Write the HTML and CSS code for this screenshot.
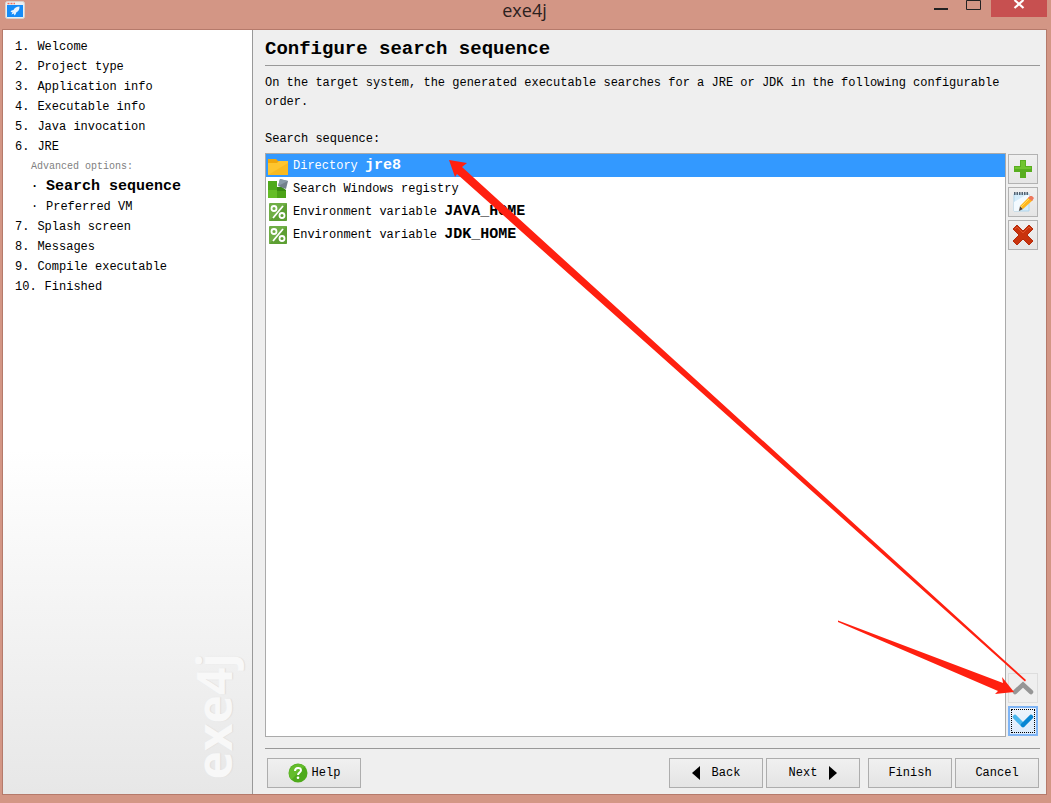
FILE: index.html
```html
<!DOCTYPE html>
<html lang="en">
<head>
  <meta charset="UTF-8">
  <meta name="viewport" content="width=device-width, initial-scale=1">
  <title>exe4j</title>
  <link rel="stylesheet" href="styles.css">
</head>
<body>
  <header class="titlebar">
    <svg class="app-icon" width="20" height="18" viewBox="0 0 20 18">
      <rect x="0.5" y="0.5" width="19" height="17" rx="2" fill="#e9eef2" stroke="#d9d2cd"/>
      <path d="M2.500 2.500h2M5.500 2.500h2M8.500 2.500h1.500" stroke="#f0705c" stroke-width="1.500"/>
      <rect x="2" y="4" width="16" height="12" fill="#148cf8"/>
      <path d="M14.500 5.500c-3 0-5 1.500-6 3.500l-2 .5-1 1.500 2 .2-1 2.300 2.500-1 .2 2 1.500-1.200.5-1.800c2.200-1 3.500-3 3.300-6z" fill="#e6f3ff"/>
    </svg>
    <h1 class="window-title">exe4j</h1>
    <div class="window-controls">
      <button type="button" class="control" aria-label="Minimize">
        <svg width="14" height="12" viewBox="0 0 14 12"><path d="M0 9h14" stroke="#222" stroke-width="2"/></svg>
      </button>
      <button type="button" class="control" aria-label="Maximize">
        <svg width="15" height="12" viewBox="0 0 15 12"><path d="M.5.5h14v9H.5z" fill="none" stroke="#222"/></svg>
      </button>
      <button type="button" class="control close" aria-label="Close">
        <svg width="12" height="10" viewBox="0 0 12 10"><path d="M1.500 0l9 8M10.500 0l-9 8" stroke="#fff" stroke-width="2.200"/></svg>
      </button>
    </div>
  </header>

  <div class="window">
    <nav class="sidebar">
      <ol class="steps">
        <li><span class="num">1.</span>Welcome</li>
        <li><span class="num">2.</span>Project type</li>
        <li><span class="num">3.</span>Application info</li>
        <li><span class="num">4.</span>Executable info</li>
        <li><span class="num">5.</span>Java invocation</li>
        <li><span class="num">6.</span>JRE
          <div class="advanced">Advanced options:</div>
          <ul class="substeps">
            <li class="current"><span class="dot">·</span>Search sequence</li>
            <li><span class="dot">·</span>Preferred VM</li>
          </ul>
        </li>
        <li><span class="num">7.</span>Splash screen</li>
        <li><span class="num">8.</span>Messages</li>
        <li><span class="num">9.</span>Compile executable</li>
        <li><span class="num">10.</span>Finished</li>
      </ol>
      <div class="watermark">exe4j</div>
    </nav>

    <main class="content">
      <h2>Configure search sequence</h2>
      <p class="description">On the target system, the generated executable searches for a JRE or JDK in the following configurable order.</p>
      <p class="list-label" id="sequenceLabel">Search sequence:</p>

      <div class="sequence">
        <ul class="entries" role="listbox" aria-labelledby="sequenceLabel">
          <li role="option" aria-selected="true" class="selected">
            <svg width="20" height="20" viewBox="0 0 20 20">
              <path d="M0 3h8l2 2h10v4H0z" fill="#efa70c"/>
              <path d="M0 7h9l2-2h9v14H0z" fill="#fdc52f"/>
              <path d="M0 19L20 7v12z" fill="#f8ba20"/>
            </svg>
            <span>Directory <b>jre8</b></span>
          </li>
          <li role="option" aria-selected="false">
            <svg width="20" height="20" viewBox="0 0 20 20">
              <path d="M0 2h9v9H0z" fill="#4fa91c"/>
              <path d="M0 11h9v8H0z" fill="#65bd27"/>
              <path d="M9 11h9v8H9z" fill="#4ca317"/>
              <path d="M9 8h5l4 3v1H9z" fill="#398812"/>
              <path d="M12 0l8 2-2 8-8-3z" fill="#73818c"/>
              <path d="M12 0l8 2-10 5z" fill="#899ba8"/>
            </svg>
            <span>Search Windows registry</span>
          </li>
          <li role="option" aria-selected="false">
            <svg width="20" height="20" viewBox="0 0 20 20">
              <rect x="1" y="1" width="18" height="18" rx="1" fill="#6fae45"/>
              <path d="M1 19L19 1v17l-1 1z" fill="#5d9f33"/>
              <g fill="none" stroke="#fff" stroke-width="1.800"><circle cx="6" cy="6.500" r="2.500"/><circle cx="14" cy="13.500" r="2.500"/><path d="M15 4L5 16"/></g>
            </svg>
            <span>Environment variable <b>JAVA_HOME</b></span>
          </li>
          <li role="option" aria-selected="false">
            <svg width="20" height="20" viewBox="0 0 20 20">
              <rect x="1" y="1" width="18" height="18" rx="1" fill="#6fae45"/>
              <path d="M1 19L19 1v17l-1 1z" fill="#5d9f33"/>
              <g fill="none" stroke="#fff" stroke-width="1.800"><circle cx="6" cy="6.500" r="2.500"/><circle cx="14" cy="13.500" r="2.500"/><path d="M15 4L5 16"/></g>
            </svg>
            <span>Environment variable <b>JDK_HOME</b></span>
          </li>
        </ul>

        <div class="tools">
          <button type="button" class="tool" aria-label="Add">
            <svg width="20" height="20" viewBox="0 0 20 20">
              <path d="M7 1h6v6h6v6h-6v6H7v-6H1V7h6z" fill="#59ae20"/>
              <path d="M8 2h4v6h6v2H2V8h6z" fill="#70c42f"/>
            </svg>
          </button>
          <button type="button" class="tool" aria-label="Edit">
            <svg width="22" height="22" viewBox="0 0 22 22">
              <path d="M2 3h15v17H2z" fill="#d5ecfa" stroke="#b0d5eb"/>
              <path d="M2 11L14 4h3v8L6 20H2z" fill="#f3faff"/>
              <path d="M2 2.500h15" stroke="#536272" stroke-width="3" stroke-dasharray="1.500 1"/>
              <path d="M7 20l1-5 3 3z" fill="#564536"/>
              <path d="M8 15l9-9 4 3-10 9z" fill="#ffb51c"/>
              <path d="M9 16l9-9" stroke="#ffdb59"/>
              <path d="M16 7l2-2h2l2 2-2 3z" fill="#ed775c"/>
            </svg>
          </button>
          <button type="button" class="tool" aria-label="Remove">
            <svg width="22" height="22" viewBox="0 0 22 22">
              <path d="M1 5l4-4 6 6 6-6 4 4-6 6 6 6-4 4-6-6-6 6-4-4 6-6z" fill="#c9330d" stroke="#b52b0a"/>
              <path d="M3 5l2-2 6 6 6-6 2 2" fill="none" stroke="#df5429"/>
            </svg>
          </button>
          <button type="button" class="tool up" aria-label="Move up" disabled>
            <svg width="22" height="14" viewBox="0 0 22 14"><path d="M3 11l8-7.500 8 7.500" fill="none" stroke="#969696" stroke-width="4.500" stroke-linecap="round"/></svg>
          </button>
          <button type="button" class="tool down" aria-label="Move down">
            <svg width="22" height="16" viewBox="0 0 22 16">
              <path d="M3 4l8 8" fill="none" stroke="#47b6ed" stroke-width="4.500" stroke-linecap="round"/>
              <path d="M11 12l8-8" fill="none" stroke="#0786d3" stroke-width="4.500" stroke-linecap="round"/>
            </svg>
          </button>
        </div>
      </div>

      <footer class="buttons">
        <button type="button" class="btn help">
          <svg width="20" height="20" viewBox="0 0 20 20">
            <circle cx="10" cy="10" r="9.500" fill="#4eaa1b"/>
            <path d="M3.300 16.700A9.500 9.500 0 0 1 16.700 3.300z" fill="#64bc2b"/>
            <path d="M7 8c0-4 6-4 6-.8 0 2.300-3 2.300-3 4.800" fill="none" stroke="#fff" stroke-width="2"/>
            <circle cx="10" cy="14.800" r="1.300" fill="#fff"/>
          </svg>
          Help
        </button>
        <button type="button" class="btn back"><svg width="8" height="14" viewBox="0 0 8 14"><path d="M8 0v14L0 7z"/></svg>Back</button>
        <button type="button" class="btn next">Next<svg width="8" height="14" viewBox="0 0 8 14"><path d="M0 0v14l8-7z"/></svg></button>
        <button type="button" class="btn finish">Finish</button>
        <button type="button" class="btn cancel">Cancel</button>
      </footer>
    </main>
  </div>

  <!-- red pointer arrows over the window -->
  <svg class="arrows" viewBox="0 0 1051 803" preserveAspectRatio="none" aria-hidden="true">
    <path d="M449 160l18 3-5 4 564 513-1 1.500-568-507.500-2 3z"/>
    <path d="M838 620.500l165 62.500-1-6 12 15-19 2 3-3-160-69z"/>
  </svg>
</body>
</html>
```
FILE: styles.css
```css
* {
  box-sizing: border-box;
}

body {
  display: flex;
  flex-direction: column;
  position: relative;
  min-height: 100vh;
  margin: 0;
  padding: 0 4px 8px 2px;
  background-color: #d39685;
  color: #000;
  font-family: "Liberation Mono", "Courier New", monospace;
  font-size: 12px;
}

h1, h2, p, ul, ol {
  margin: 0;
  padding: 0;
}

ul, ol {
  list-style: none;
}

button {
  padding: 0;
  color: inherit;
  font: inherit;
}

/* Title bar */
.titlebar {
  display: grid;
  grid-template-columns: 1fr auto 1fr;
  height: 29px;
}

.app-icon {
  margin: 1px 0 0 3px;
}

.window-title {
  color: #2b211e;
  font-family: "Open Sans", "Segoe UI", sans-serif;
  font-size: 18px;
  font-weight: normal;
  line-height: 20px;
}

.window-controls {
  display: flex;
  justify-content: flex-end;
}

.control {
  display: flex;
  justify-content: center;
  width: 32px;
  height: 17px;
  border: 0;
  background: none;
}

.close {
  width: 56px;
  margin-left: 2px;
  background-color: #c75050;
}

/* Window body */
.window {
  display: flex;
  flex: 1;
  border: 1px solid #b57a6b;
}

.sidebar {
  display: flex;
  flex-direction: column;
  justify-content: space-between;
  width: 250px;
  flex-shrink: 0;
  padding: 7px 12px 14px 12px;
  border-right: 1px solid #999;
  background: linear-gradient(#fff 55%, #e7e7e7);
}

.steps {
  line-height: 20px;
}

.num {
  margin-right: 8px;
}

.advanced {
  padding-left: 16px;
  color: #808080;
  font-size: 10px;
}

.substeps {
  padding-left: 16px;
}

.substeps li {
  display: flex;
}

.dot {
  width: 15px;
  font-size: 12px;
}

.current {
  font-size: 15px;
  font-weight: bold;
}

.watermark {
  align-self: flex-end;
  color: #f8f8f8;
  font-family: "Open Sans", sans-serif;
  font-size: 48px;
  font-weight: bold;
  line-height: 52px;
  text-shadow: 0 1px 1px #ddd;
  writing-mode: vertical-rl;
  transform: rotate(180deg);
}

.content {
  display: flex;
  flex: 1;
  flex-direction: column;
  min-width: 0;
  padding: 7px 6px 6px 12px;
  background-color: #efefef;
}

h2 {
  padding-bottom: 3px;
  border-bottom: 1px solid #999;
  font-size: 19px;
  line-height: 25px;
}

.description {
  padding-top: 8px;
  line-height: 19px;
}

.list-label {
  padding: 18px 0 4px;
  line-height: 19px;
}

/* Search sequence list */
.sequence {
  display: flex;
  flex: 1;
  gap: 2px;
}

.entries {
  flex: 1;
  border: 1px solid #aaa;
  background-color: #fff;
}

.entries li {
  display: flex;
  align-items: center;
  gap: 5px;
  height: 23px;
  padding-left: 2px;
  line-height: 22px;
}

.entries b {
  font-size: 15px;
}

.entries .selected {
  background-color: #3399ff;
  color: #fff;
}

.tools {
  display: flex;
  flex-direction: column;
  gap: 3px;
  padding: 1px 2px 1px 0;
}

.tool {
  display: flex;
  align-items: center;
  justify-content: center;
  width: 30px;
  height: 30px;
  border: 1px solid #b2b2b2;
  background: linear-gradient(#f0f0f0, #e5e5e5);
}

.up {
  margin-top: auto;
  border-color: #ddd;
  background: #efefef;
}

.down {
  border: 2px solid #7eb4f5;
  outline: 1px dotted #000;
  outline-offset: -4px;
  background: linear-gradient(#edf4fc, #dcebfb);
}

/* Bottom buttons */
.buttons {
  display: flex;
  gap: 3px;
  margin-top: 11px;
  padding: 9px 1px 0 2px;
  border-top: 1px solid #999;
}

.btn {
  display: flex;
  align-items: center;
  justify-content: center;
  width: 94px;
  height: 30px;
  border: 1px solid #adadad;
  background: linear-gradient(#f0f0f0, #e4e4e4);
}

.help {
  gap: 4px;
  margin-right: auto;
}

.back,
.next {
  gap: 12px;
}

.finish,
.cancel {
  width: 84px;
}

.finish {
  margin-left: 5px;
}

.arrows {
  position: absolute;
  top: 0;
  left: 0;
  width: 100%;
  height: 100%;
  fill: #ff2010;
  pointer-events: none;
}
```
